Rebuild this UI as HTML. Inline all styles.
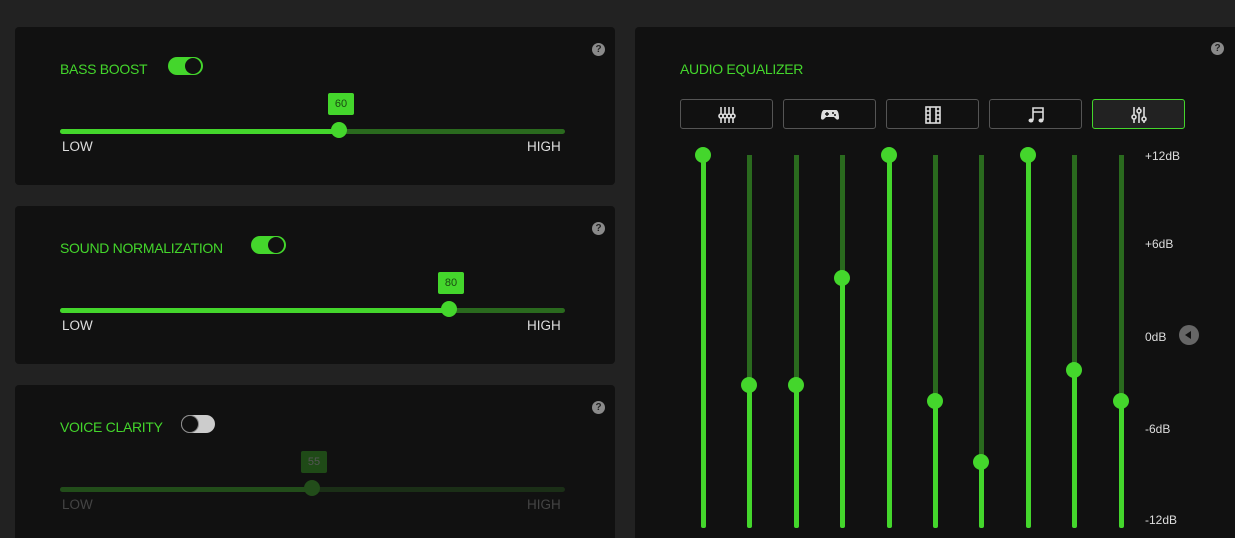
<!DOCTYPE html>
<html style="width:1235px;height:538px;overflow:hidden"><head><meta charset="utf-8"><style>
*{margin:0;padding:0;box-sizing:border-box}
body{width:1235px;height:538px;background:#222;position:relative;overflow:hidden;font-family:"Liberation Sans",sans-serif}
.a{position:absolute}
.card{position:absolute;background:#111;border-radius:4px}
.title{position:absolute;color:#44d62c;font-size:14px;letter-spacing:-0.3px}
.q{position:absolute;width:13px;height:13px;border-radius:50%;background:#8a8a8a;color:#222;font-size:10px;font-weight:bold;text-align:center;line-height:13px}
.lbl{position:absolute;color:#ddd;font-size:13.5px}
.btn{position:absolute;top:99px;width:93px;height:30px;border:1px solid #555;border-radius:3px;background:#111}
.btn svg{position:absolute;left:36px;top:5px}
.db{position:absolute;left:1145px;color:#ddd;font-size:12px}
</style></head><body>

<div class="card" style="left:15px;top:27px;width:600px;height:158px"></div>
<div class="card" style="left:15px;top:206px;width:600px;height:158px"></div>
<div class="card" style="left:15px;top:385px;width:600px;height:153px;border-radius:4px 4px 0 0"></div>
<div class="card" style="left:635px;top:27px;width:600px;height:511px;border-radius:4px 0 0 0"></div>

<!-- card 1 -->
<div class="q" style="left:592px;top:43px">?</div>
<div class="title" style="left:60px;top:61px">BASS BOOST</div>
<div class="a" style="left:168px;top:57px;width:35px;height:18px;border-radius:9px;background:#44d62c"></div>
<div class="a" style="left:185px;top:58px;width:16px;height:16px;border-radius:50%;background:#111"></div>
<div class="a" style="left:328px;top:93px;width:26px;height:22px;border-radius:2px;background:#44d62c;color:#1a4a12;font-size:11px;text-align:center;line-height:22px">60</div>
<div class="a" style="left:60px;top:129px;width:505px;height:5px;border-radius:3px;background:#2a6a1e"></div>
<div class="a" style="left:60px;top:129px;width:279px;height:5px;border-radius:3px;background:#44d62c"></div>
<div class="a" style="left:331px;top:122px;width:16px;height:16px;border-radius:50%;background:#44d62c"></div>
<div class="lbl" style="left:62px;top:139px">LOW</div>
<div class="lbl" style="left:527px;top:139px">HIGH</div>

<!-- card 2 -->
<div class="q" style="left:592px;top:222px">?</div>
<div class="title" style="left:60px;top:240px">SOUND NORMALIZATION</div>
<div class="a" style="left:251px;top:236px;width:35px;height:18px;border-radius:9px;background:#44d62c"></div>
<div class="a" style="left:268px;top:237px;width:16px;height:16px;border-radius:50%;background:#111"></div>
<div class="a" style="left:438px;top:272px;width:26px;height:22px;border-radius:2px;background:#44d62c;color:#1a4a12;font-size:11px;text-align:center;line-height:22px">80</div>
<div class="a" style="left:60px;top:308px;width:505px;height:5px;border-radius:3px;background:#2a6a1e"></div>
<div class="a" style="left:60px;top:308px;width:389px;height:5px;border-radius:3px;background:#44d62c"></div>
<div class="a" style="left:441px;top:301px;width:16px;height:16px;border-radius:50%;background:#44d62c"></div>
<div class="lbl" style="left:62px;top:318px">LOW</div>
<div class="lbl" style="left:527px;top:318px">HIGH</div>

<!-- card 3 -->
<div class="q" style="left:592px;top:401px">?</div>
<div class="title" style="left:60px;top:419px">VOICE CLARITY</div>
<div class="a" style="left:181px;top:415px;width:34px;height:18px;border-radius:9px;background:#ccc"></div>
<div class="a" style="left:181px;top:415px;width:18px;height:18px;border-radius:50%;background:#111;border:1px solid #888"></div>
<div class="a" style="left:301px;top:451px;width:26px;height:22px;border-radius:2px;background:#1f4a17;color:#555;font-size:11px;text-align:center;line-height:22px">55</div>
<div class="a" style="left:60px;top:487px;width:505px;height:5px;border-radius:3px;background:#1b2f17"></div>
<div class="a" style="left:60px;top:487px;width:252px;height:5px;border-radius:3px;background:#224d1a"></div>
<div class="a" style="left:304px;top:480px;width:16px;height:16px;border-radius:50%;background:#224d1a"></div>
<div class="lbl" style="left:62px;top:497px;color:#444">LOW</div>
<div class="lbl" style="left:527px;top:497px;color:#444">HIGH</div>

<!-- EQ -->
<div class="q" style="left:1211px;top:42px">?</div>
<div class="title" style="left:680px;top:61px">AUDIO EQUALIZER</div>

<div class="btn" style="left:680px"><svg width="20" height="20" viewBox="0 0 20 20" fill="none" stroke="#ddd" stroke-width="1.6"><path d="M4 2v16M8 2v16M12 2v16M16 2v16"/><circle cx="4" cy="11" r="2" fill="#111"/><circle cx="8" cy="11" r="2" fill="#111"/><circle cx="12" cy="11" r="2" fill="#111"/><circle cx="16" cy="11" r="2" fill="#111"/></svg></div>
<div class="btn" style="left:783px"><svg width="20" height="20" viewBox="0 0 20 20"><path d="M4 5h12c2 0 3 4 3 8 0 2-2 2-3 1l-2-2H6l-2 2c-1 1-3 1-3-1 0-4 1-8 3-8z" fill="#ddd"/><path d="M5 9h4M7 7v4" stroke="#111" stroke-width="1.4"/><circle cx="13" cy="8" r="1" fill="#111"/><circle cx="15" cy="10" r="1" fill="#111"/></svg></div>
<div class="btn" style="left:886px"><svg width="20" height="20" viewBox="0 0 20 20" fill="none" stroke="#ddd" stroke-width="1.6"><rect x="3" y="2" width="14" height="16"/><path d="M7 2v16M13 2v16M3 6h4M3 10h4M3 14h4M13 6h4M13 10h4M13 14h4"/></svg></div>
<div class="btn" style="left:989px"><svg width="20" height="20" viewBox="0 0 20 20"><path d="M7 15V3h10v12M7 7h10" fill="none" stroke="#ddd" stroke-width="1.6"/><ellipse cx="5" cy="15.5" rx="2.5" ry="2" fill="#ddd"/><ellipse cx="15" cy="15.5" rx="2.5" ry="2" fill="#ddd"/></svg></div>
<div class="btn" style="left:1092px;border-color:#44d62c;background:#222"><svg width="20" height="20" viewBox="0 0 20 20" fill="none" stroke="#ddd" stroke-width="1.6"><path d="M5 2v16M10 2v16M15 2v16"/><circle cx="5" cy="12" r="2" fill="#222"/><circle cx="10" cy="6" r="2" fill="#222"/><circle cx="15" cy="14" r="2" fill="#222"/></svg></div>

<div id="eq"></div>
<div class="db" style="top:149px">+12dB</div>
<div class="db" style="top:237px">+6dB</div>
<div class="db" style="top:330px">0dB</div>
<div class="db" style="top:422px">-6dB</div>
<div class="db" style="top:513px">-12dB</div>
<div class="a" style="left:1179px;top:325px;width:20px;height:20px;border-radius:50%;background:#666"></div>
<div class="a" style="left:1185px;top:331px;width:0;height:0;border-top:4px solid transparent;border-bottom:4px solid transparent;border-right:6px solid #111"></div>

<script>
var xs=[703,749,796,842,889,935,981,1028,1074,1121],ys=[155,385,385,278,155,401,462,155,370,401],h='';
for(var i=0;i<10;i++){var x=xs[i],y=ys[i];
h+='<div class="a" style="left:'+(x-2.5)+'px;top:155px;width:5px;height:'+(y-155)+'px;background:#2a6a1e"></div>';
h+='<div class="a" style="left:'+(x-2.5)+'px;top:'+y+'px;width:5px;height:'+(528-y)+'px;background:#44d62c;border-radius:0 0 2px 2px"></div>';
h+='<div class="a" style="left:'+(x-8)+'px;top:'+(y-8)+'px;width:16px;height:16px;border-radius:50%;background:#44d62c"></div>';}
document.getElementById('eq').innerHTML=h;
</script>
</body></html>
